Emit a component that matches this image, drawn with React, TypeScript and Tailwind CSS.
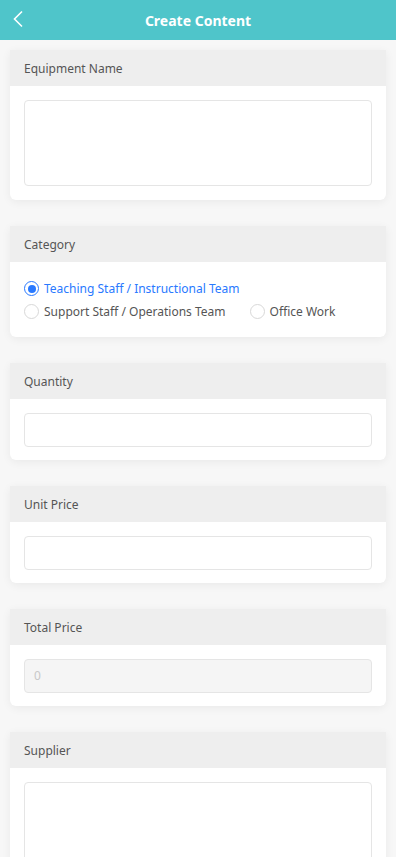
import React from "react"

const font = { fontFamily: '"Noto Sans", "Open Sans", sans-serif' }

function Card({ label, children }: { label: string; children: React.ReactNode }) {
  return (
    <div className="mx-[10px] bg-white rounded-b-[6px] shadow-[0_2px_10px_rgba(0,0,0,0.06)]">
      <div className="h-9 bg-[#eeeeee] px-[14px] pt-[1px] flex items-center text-[12px] text-[#555555]">{label}</div>
      {children}
    </div>
  )
}

function Radio({ label, checked }: { label: string; checked?: boolean }) {
  return (
    <div className="flex items-center h-[23px] mr-[24px]">
      <span
        className={
          checked
            ? "w-[15px] h-[15px] rounded-full border border-[#2979ff] flex items-center justify-center"
            : "w-[15px] h-[15px] rounded-full border border-[#d8d8d8] bg-white"
        }
      >
        {checked && <span className="w-[8px] h-[8px] rounded-full bg-[#2979ff]" />}
      </span>
      <span className={checked ? "ml-[5px] text-[12px] text-[#2979ff]" : "ml-[5px] text-[12px] text-[#555555]"}>{label}</span>
    </div>
  )
}

export default function App() {
  return (
    <div className="min-h-[857px] bg-[#f7f7f7] flex flex-col" style={font}>
      <div className="h-10 bg-[#4fc5ca] flex items-center relative">
        <svg className="absolute left-[12px] top-[10px]" width="12" height="18" viewBox="0 0 12 18" fill="none">
          <path d="M10 1.5 L2.5 9 L10 16.5" stroke="white" strokeWidth="1.6" />
        </svg>
        <div className="flex-1 text-center text-white font-bold text-[14px]">Create Content</div>
      </div>

      <div className="flex flex-col gap-[26px] pt-[10px] pb-[20px]">
        <Card label="Equipment Name">
          <div className="px-[14px] pt-[14px] pb-[14px]">
            <div className="h-[86px] border border-[#e5e5e5] rounded-[4px]" />
          </div>
        </Card>

        <Card label="Category">
          <div className="px-[14px] pt-[15px] pb-[14px] flex flex-wrap">
            <Radio label="Teaching Staff / Instructional Team" checked />
            <Radio label="Support Staff / Operations Team" />
            <Radio label="Office Work" />
          </div>
        </Card>

        <Card label="Quantity">
          <div className="px-[14px] pt-[14px] pb-[13px]">
            <div className="h-[34px] border border-[#e5e5e5] rounded-[4px]" />
          </div>
        </Card>

        <Card label="Unit Price">
          <div className="px-[14px] pt-[14px] pb-[13px]">
            <div className="h-[34px] border border-[#e5e5e5] rounded-[4px]" />
          </div>
        </Card>

        <Card label="Total Price">
          <div className="px-[14px] pt-[14px] pb-[13px]">
            <div className="h-[34px] border border-[#e5e5e5] rounded-[4px] bg-[#f5f5f5] flex items-center px-[9px] text-[12px] text-[#c8c8c8]">0</div>
          </div>
        </Card>

        <Card label="Supplier">
          <div className="px-[14px] pt-[14px] pb-[14px]">
            <div className="h-[86px] border border-[#e5e5e5] rounded-[4px]" />
          </div>
        </Card>
      </div>
    </div>
  )
}
